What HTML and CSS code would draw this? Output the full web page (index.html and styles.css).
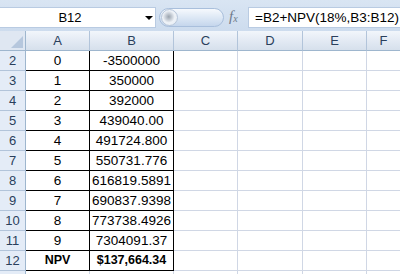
FILE: index.html
```html
<!DOCTYPE html>
<html lang="en">
<head>
  <meta charset="UTF-8" />
  <title>NPV Sheet</title>
  <link rel="stylesheet" href="styles.css">
</head>
<body>
  <div class="window">
    <div class="formula-bar">
      <div class="name-box">
        <span class="name-ref">B12</span>
        <span class="name-arrow"></span>
      </div>
      <div class="bar-middle">
        <div class="splitter"><span class="knob"></span></div>
        <span class="fx">f<sub>x</sub></span>
      </div>
      <div class="formula-input">=B2+NPV(18%,B3:B12)</div>
    </div>

    <div class="sheet">
      <div class="corner"></div>
      <div class="col-head">A</div>
      <div class="col-head">B</div>
      <div class="col-head">C</div>
      <div class="col-head">D</div>
      <div class="col-head">E</div>
      <div class="col-head last">F</div>

      <div class="row-head">2</div><div class="cell data">0</div><div class="cell data">-3500000</div><div class="cell"></div><div class="cell"></div><div class="cell"></div><div class="cell last"></div>
      <div class="row-head">3</div><div class="cell data">1</div><div class="cell data">350000</div><div class="cell"></div><div class="cell"></div><div class="cell"></div><div class="cell last"></div>
      <div class="row-head">4</div><div class="cell data">2</div><div class="cell data">392000</div><div class="cell"></div><div class="cell"></div><div class="cell"></div><div class="cell last"></div>
      <div class="row-head">5</div><div class="cell data">3</div><div class="cell data">439040.00</div><div class="cell"></div><div class="cell"></div><div class="cell"></div><div class="cell last"></div>
      <div class="row-head">6</div><div class="cell data">4</div><div class="cell data">491724.800</div><div class="cell"></div><div class="cell"></div><div class="cell"></div><div class="cell last"></div>
      <div class="row-head">7</div><div class="cell data">5</div><div class="cell data">550731.776</div><div class="cell"></div><div class="cell"></div><div class="cell"></div><div class="cell last"></div>
      <div class="row-head">8</div><div class="cell data">6</div><div class="cell data">616819.5891</div><div class="cell"></div><div class="cell"></div><div class="cell"></div><div class="cell last"></div>
      <div class="row-head">9</div><div class="cell data">7</div><div class="cell data">690837.9398</div><div class="cell"></div><div class="cell"></div><div class="cell"></div><div class="cell last"></div>
      <div class="row-head">10</div><div class="cell data">8</div><div class="cell data">773738.4926</div><div class="cell"></div><div class="cell"></div><div class="cell"></div><div class="cell last"></div>
      <div class="row-head">11</div><div class="cell data">9</div><div class="cell data">7304091.37</div><div class="cell"></div><div class="cell"></div><div class="cell"></div><div class="cell last"></div>
      <div class="row-head">12</div><div class="cell data bold">NPV</div><div class="cell data bold">$137,664.34</div><div class="cell"></div><div class="cell"></div><div class="cell"></div><div class="cell last"></div>
      <div class="row-head"></div><div class="cell"></div><div class="cell"></div><div class="cell"></div><div class="cell"></div><div class="cell"></div><div class="cell last"></div>
    </div>
  </div>
</body>
</html>
```

FILE: styles.css
```css
body {
  margin: 0;
  background-color: #ffffff;
  font-family: 'Liberation Sans', Arial, sans-serif;
}

.window {
  width: 400px;
  height: 274px;
  overflow: hidden;
}

/* formula bar */

.formula-bar {
  height: 31px;
  box-sizing: border-box;
  padding-top: 7px;
  padding-bottom: 3px;
  display: flex;
  background: linear-gradient(#d9e5f3, #cddcee);
}

.name-box {
  width: 156px;
  box-sizing: border-box;
  background-color: #ffffff;
  border-top: 1px solid #b9cbe2;
  border-bottom: 1px solid #b9cbe2;
  border-right: 1px solid #b9cbe2;
  display: flex;
  align-items: center;
}

.name-ref {
  width: 140px;
  text-align: center;
  font-size: 13px;
  color: #000;
}

.name-arrow {
  width: 0;
  height: 0;
  margin-left: 5px;
  border-left: 4px solid transparent;
  border-right: 4px solid transparent;
  border-top: 4px solid #000;
}

.bar-middle {
  width: 89px;
  display: flex;
  align-items: center;
  padding-left: 3px;
  gap: 5px;
}

.splitter {
  width: 65px;
  height: 19px;
  box-sizing: border-box;
  border-radius: 10px;
  border: 1px solid #a9bfdc;
  background: linear-gradient(#f6f9fd, #dde8f5 50%, #c5d6ec);
  display: flex;
  align-items: center;
  padding-left: 1px;
}

.knob {
  width: 15px;
  height: 15px;
  border-radius: 50%;
  background: radial-gradient(circle at 45% 45%, #9aa3ad 0, #c3cad3 3px, #eef2f7 6px, #e3eaf3 100%);
  border: 1px solid #b7c6da;
}

.fx {
  font-family: 'Liberation Serif', serif;
  font-style: italic;
  font-size: 15px;
  color: #6f7a89;
  line-height: 15px;
}

.fx sub {
  font-size: 10px;
  vertical-align: -1px;
}

.formula-input {
  flex: 1;
  background-color: #ffffff;
  border: 1px solid #b9cbe2;
  border-right: none;
  font-size: 13.5px;
  color: #000;
  padding-left: 6px;
  line-height: 19px;
}

/* grid */

.sheet {
  display: grid;
  grid-template-columns: 26px 64px 84px 64px 65px 64px 1fr;
  grid-auto-rows: 20px;
}

.corner {
  box-sizing: border-box;
  background-color: #dfe7f2;
  border-right: 1px solid #9eb6ce;
  border-bottom: 1px solid #9eb6ce;
  position: relative;
}

.corner::after {
  content: '';
  position: absolute;
  right: 2px;
  bottom: 2px;
  border-left: 12px solid transparent;
  border-bottom: 12px solid #b6c7dd;
}

.col-head {
  box-sizing: border-box;
  background: linear-gradient(#f2f6fb, #e2e9f3 55%, #d6e0ec);
  border-right: 1px solid #b2c4da;
  border-bottom: 1px solid #9eb6ce;
  text-align: center;
  font-size: 13px;
  line-height: 19px;
  color: #2a3f5c;
}

.row-head {
  box-sizing: border-box;
  background-color: #e4ecf7;
  border-right: 1px solid #9eb6ce;
  border-bottom: 1px solid #b2c4da;
  text-align: center;
  font-size: 13px;
  line-height: 19px;
  color: #2a3f5c;
}

.cell {
  box-sizing: border-box;
  border-right: 1px solid #d0d7e5;
  border-bottom: 1px solid #d0d7e5;
}

.cell.data {
  border-right-color: #000;
  border-bottom-color: #000;
  text-align: center;
  font-size: 13.5px;
  line-height: 19px;
  color: #000;
}

.cell.bold {
  font-weight: bold;
  font-size: 12.5px;
}

.last {
  border-right: none;
}
```
